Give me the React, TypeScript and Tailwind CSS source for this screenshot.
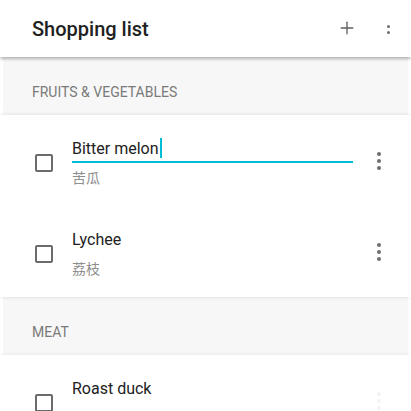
import { Plus } from "lucide-react";

const font = { fontFamily: "Roboto, 'Noto Sans CJK SC', sans-serif" };

function Kebab({ small, faint }: { small?: boolean; faint?: boolean }) {
  const d = small ? "w-[3px] h-[3px]" : "w-[4px] h-[4px]";
  const c = faint ? "bg-[#f4f4f4]" : "bg-[#6e6e6e]";
  return (
    <div className="flex flex-col items-center gap-[3px]">
      {!small && <span className={`${d} rounded-full ${c}`} />}
      <span className={`${d} rounded-full ${c}`} />
      <span className={`${d} rounded-full ${c}`} />
    </div>
  );
}

function Item({ name, zh, editing, faint }: { name: string; zh: string; editing?: boolean; faint?: boolean }) {
  return (
    <div className="h-[91px] flex">
      <div className="w-[72px] pl-[35px] pt-[39px]">
        <div className="w-[18px] h-[18px] border-2 border-[#6b6b6b] rounded-[2px]" />
      </div>
      <div className="w-[281px] pt-[22px]">
        <div
          className={`h-[26px] flex items-start border-b-2 ${editing ? "border-[#00bcd4]" : "border-transparent"}`}
        >
          <span className="text-[16px] leading-[24px] text-[#212121]">{name}</span>
          {editing && <span className="w-[2px] h-[20px] mt-[1px] ml-[1px] bg-[#00bcd4]" />}
        </div>
        <div className="mt-[5px] text-[14px] leading-[20px] text-[#8e8e8e]">{zh}</div>
      </div>
      <div className="flex-1 flex justify-center pt-[37px] pr-[6px]">
        <Kebab faint={faint} />
      </div>
    </div>
  );
}

function Section({ label }: { label: string }) {
  return (
    <div className="h-[58px] mx-[3px] bg-[#f7f7f7] flex items-center pl-[29px] pt-[12px]">
      <span className="text-[14px] text-[#7a7a7a]">{label}</span>
    </div>
  );
}

export default function App() {
  return (
    <div className="w-[411px] h-[411px] overflow-hidden bg-white relative" style={font}>
      <div className="relative z-20 h-[57px] bg-white flex items-center pl-[32px] shadow-[0_2px_3px_rgba(0,0,0,0.28)]">
        <h1 className="text-[20px] font-medium text-[#212121] flex-1">Shopping list</h1>
        <Plus size={20} strokeWidth={1.6} className="text-[#5f5f5f] mr-[30px] -mt-[1px]" />
        <div className="mr-[21px] mt-[2px]">
          <Kebab small />
        </div>
      </div>

      <Section label="FRUITS & VEGETABLES" />

      <div className="relative z-10 bg-white shadow-[0_0_4px_rgba(0,0,0,0.12)]">
        <Item name="Bitter melon" zh="苦瓜" editing />
        <Item name="Lychee" zh="荔枝" />
      </div>

      <Section label="MEAT" />

      <div className="relative z-10 bg-white shadow-[0_0_4px_rgba(0,0,0,0.08)]">
        <Item name="Roast duck" zh="烤鸭" faint />
      </div>
    </div>
  );
}
